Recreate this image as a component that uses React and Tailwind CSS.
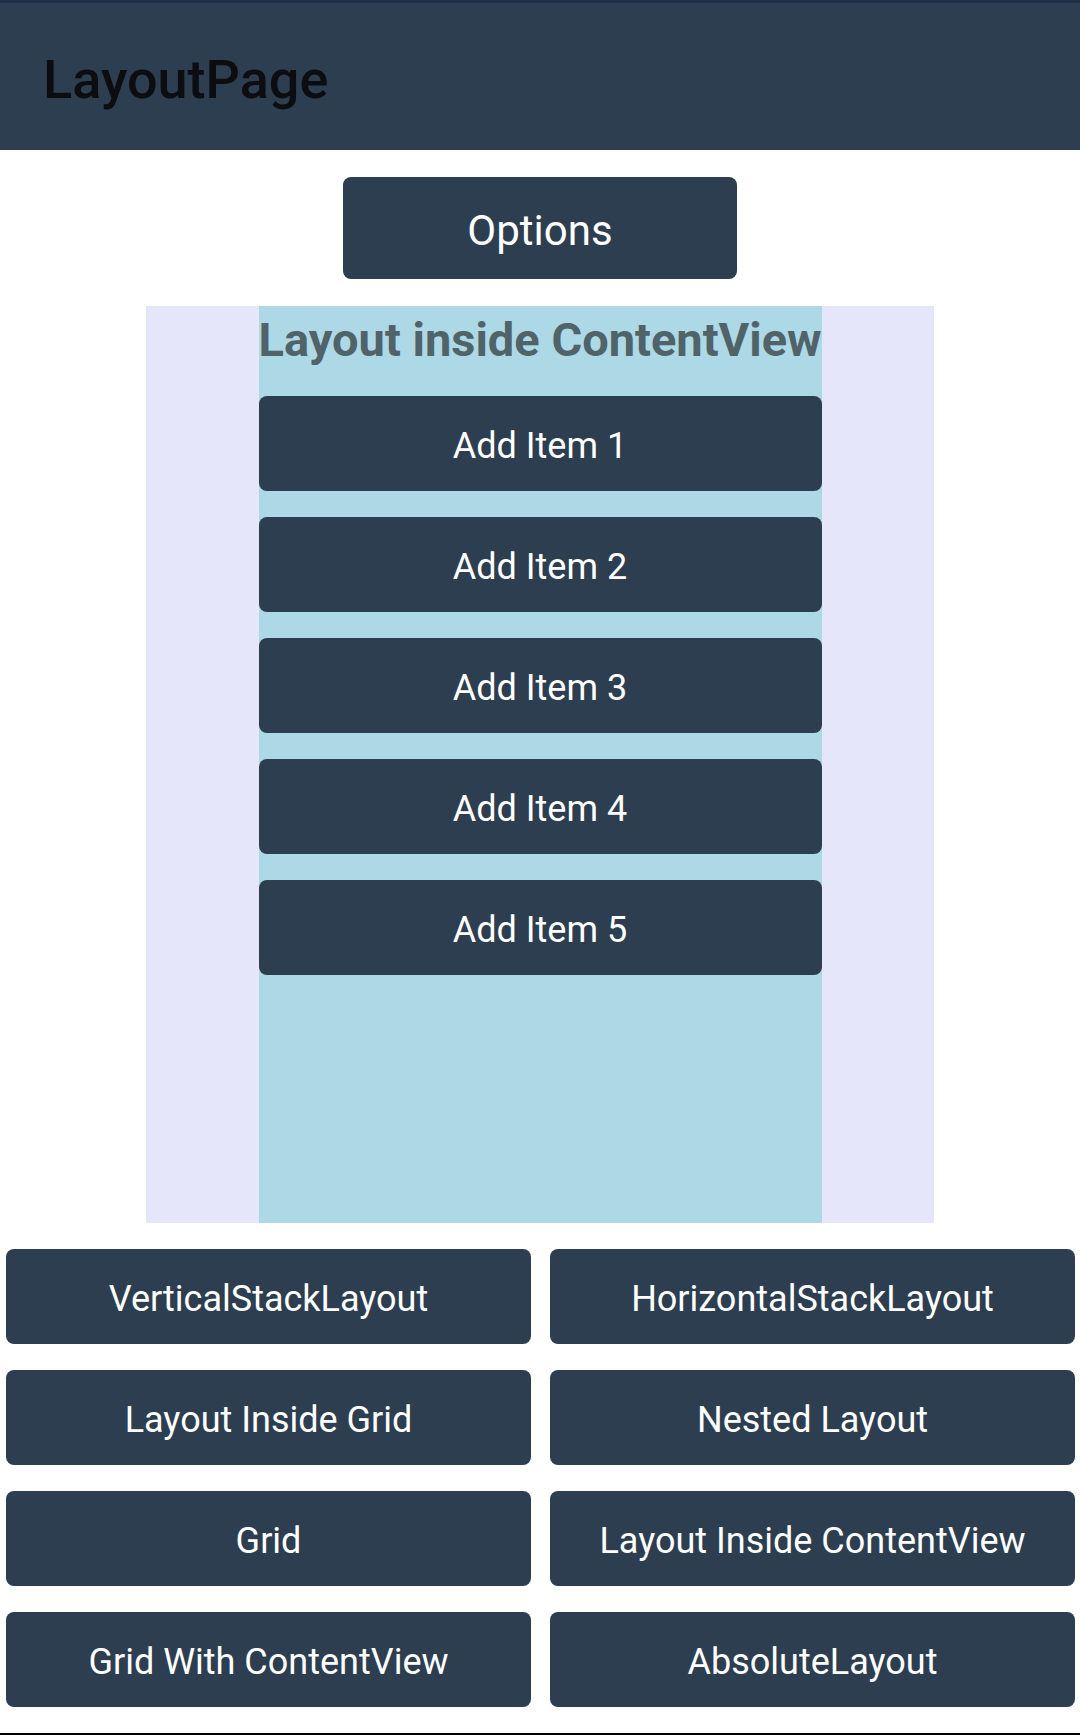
import React from "react";

const font = { fontFamily: "Roboto, 'Noto Sans', Arial, sans-serif" };

function Btn({ children, className = "" }) {
  return (
    <div
      className={
        "flex items-center justify-center rounded-[8px] bg-[#2c3e50] text-white text-[36px] leading-[normal] pt-[4px] " +
        className
      }
    >
      {children}
    </div>
  );
}

export default function App() {
  const items = ["Add Item 1", "Add Item 2", "Add Item 3", "Add Item 4", "Add Item 5"];
  const grid = [
    "VerticalStackLayout",
    "HorizontalStackLayout",
    "Layout Inside Grid",
    "Nested Layout",
    "Grid",
    "Layout Inside ContentView",
    "Grid With ContentView",
    "AbsoluteLayout",
  ];
  return (
    <div className="w-[1080px] h-[1735px] flex flex-col bg-white" style={font}>
      <div className="h-[3px] bg-[#1d3047]" />
      <div className="h-[147px] bg-[#2c3e50] pt-[45px] pl-[43px]">
        <div className="text-[54px] font-medium leading-[normal] text-[#0b0d10]">LayoutPage</div>
      </div>
      <div className="flex justify-center pt-[27px]">
        <Btn className="w-[394px] h-[102px] text-[42px]">Options</Btn>
      </div>
      <div className="flex justify-center mt-[27px]">
        <div className="w-[788px] h-[917px] bg-[#e6e6fa] flex justify-center">
          <div className="w-[563px] h-full bg-[#add8e6] flex flex-col pt-[6px]">
            <div className="text-center font-bold text-[47px] leading-[normal] text-[#4f6369] whitespace-nowrap">
              Layout inside ContentView
            </div>
            <div className="flex flex-col gap-[26px] mt-[29px]">
              {items.map((t) => (
                <Btn key={t} className="h-[95px]">
                  {t}
                </Btn>
              ))}
            </div>
          </div>
        </div>
      </div>
      <div className="grid grid-cols-2 gap-x-[19px] gap-y-[26px] pl-[6px] pr-[5px] mt-[26px]">
        {grid.map((t) => (
          <Btn key={t} className="h-[95px]">
            {t}
          </Btn>
        ))}
      </div>
      <div className="flex-1" />
      <div className="h-[2px] bg-black" />
    </div>
  );
}
